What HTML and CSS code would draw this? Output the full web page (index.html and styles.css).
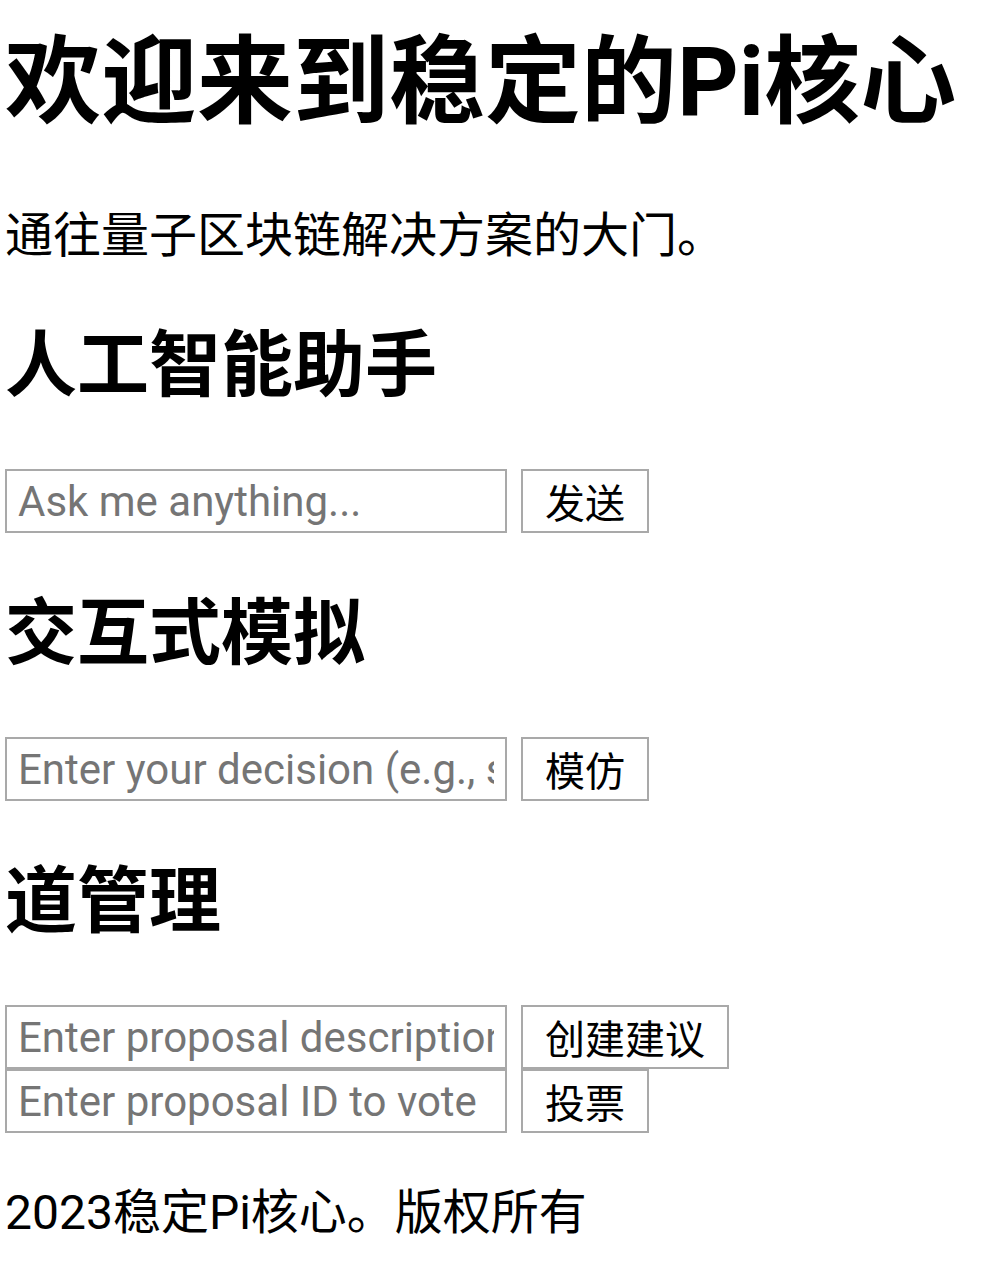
FILE: index.html
```html
<!DOCTYPE html>
<html lang="zh">
<head>
<meta charset="utf-8">
<title>稳定的Pi核心</title>
<link rel="stylesheet" href="styles.css">
</head>
<body>
<header class="hero">
  <h1 class="title">欢迎来到稳定的Pi核心</h1>
  <p class="lead">通往量子区块链解决方案的大门。</p>
</header>
<main>
  <section class="block">
    <h2 class="block-title">人工智能助手</h2>
    <div class="rows">
      <div class="row">
        <input class="field" type="text" placeholder="Ask me anything...">
        <button class="btn" type="button">发送</button>
      </div>
    </div>
  </section>
  <section class="block">
    <h2 class="block-title">交互式模拟</h2>
    <div class="rows">
      <div class="row">
        <input class="field" type="text" placeholder="Enter your decision (e.g., save, invest)">
        <button class="btn" type="button">模仿</button>
      </div>
    </div>
  </section>
  <section class="block">
    <h2 class="block-title">道管理</h2>
    <div class="rows">
      <div class="row">
        <input class="field" type="text" placeholder="Enter proposal description">
        <button class="btn" type="button">创建建议</button>
      </div>
      <div class="row">
        <input class="field" type="text" placeholder="Enter proposal ID to vote">
        <button class="btn" type="button">投票</button>
      </div>
    </div>
  </section>
</main>
<footer class="footer">
  <p class="copy">2023稳定Pi核心。版权所有</p>
</footer>
</body>
</html>
```
FILE: styles.css
```css
html, body {
  background: #ffffff;
}
body {
  margin: 0;
  padding: 25px 0 0 5px;
  color: #000000;
  font-family: Roboto, "Noto Sans CJK SC", sans-serif;
}
.title {
  margin: 0 0 66px;
  font-size: 96px;
  line-height: 115px;
  font-weight: 700;
}
.lead {
  margin: 0 0 57px;
  font-size: 48px;
  line-height: 60px;
  font-weight: 400;
}
.block {
  margin: 0 0 58px;
}
.block-title {
  margin: 0 0 60px;
  font-size: 72px;
  line-height: 86px;
  font-weight: 700;
}
.rows {
  display: flex;
  flex-direction: column;
}
.row {
  display: flex;
  align-items: flex-start;
  gap: 14px;
}
.field {
  box-sizing: border-box;
  width: 502px;
  height: 64px;
  margin: 0;
  padding: 0 11px;
  border: 2px solid #a9a9a9;
  border-radius: 0;
  background: #ffffff;
  font-family: Roboto, "Noto Sans CJK SC", sans-serif;
  font-size: 42px;
  color: #000000;
  outline: none;
}
.field::placeholder {
  color: #757575;
  opacity: 1;
}
.btn {
  box-sizing: border-box;
  height: 64px;
  margin: 0;
  padding: 0 22px;
  border: 2px solid #a9a9a9;
  border-radius: 0;
  background: #ffffff;
  color: #000000;
  font-family: "Noto Sans CJK SC", sans-serif;
  font-size: 40px;
  line-height: 1;
}
.footer {
  margin-top: -8px;
}
.copy {
  margin: 0;
  font-size: 48px;
  line-height: 60px;
}
```
